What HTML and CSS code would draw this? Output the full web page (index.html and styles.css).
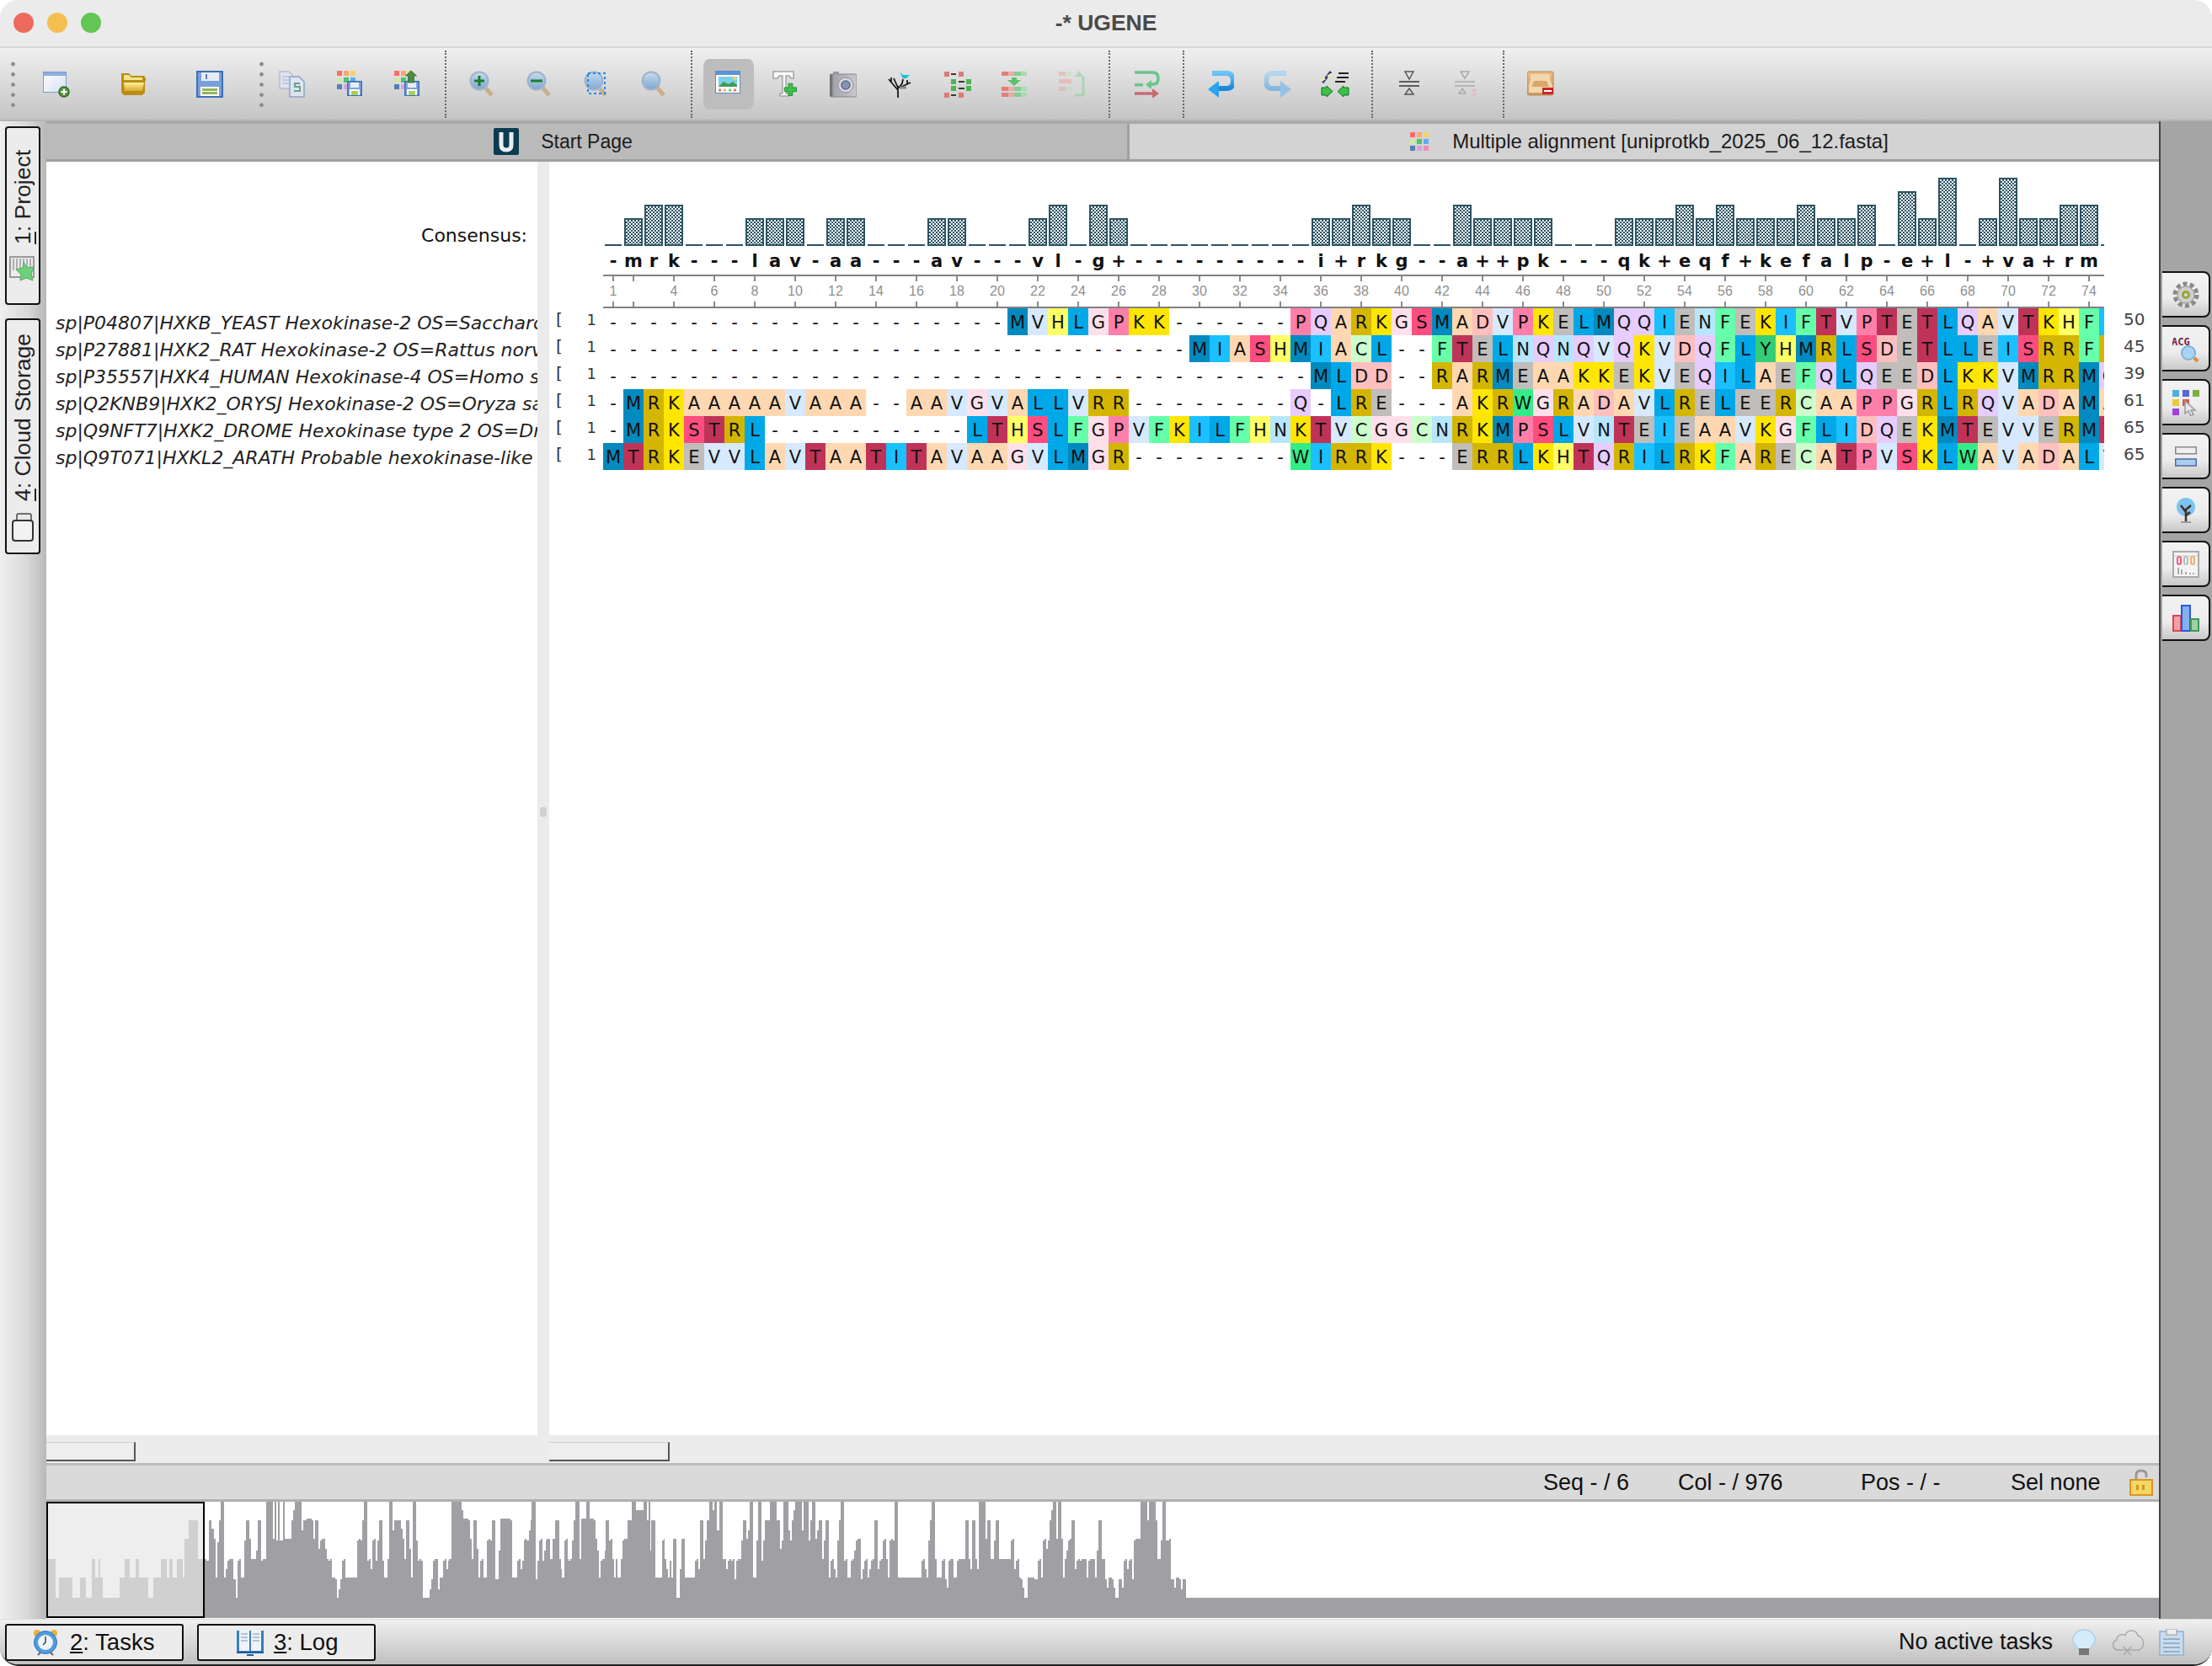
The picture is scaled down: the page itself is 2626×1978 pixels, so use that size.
FILE: index.html
```html
<!DOCTYPE html>
<html lang="en">
<head>
<meta charset="utf-8">
<title>-* UGENE</title>
<link rel="stylesheet" href="styles.css">
</head>
<body>
<svg class="defs" width="0" height="0" aria-hidden="true">
<defs>
<linearGradient id="gDoc" x1="0" y1="0" x2="1" y2="1"><stop offset="0" stop-color="#fff"/><stop offset="1" stop-color="#d5def0"/></linearGradient>
<linearGradient id="gGold" x1="0" y1="0" x2="0" y2="1"><stop offset="0" stop-color="#fff29a"/><stop offset="1" stop-color="#d9a92c"/></linearGradient>
<linearGradient id="gBlue" x1="0" y1="0" x2="0" y2="1"><stop offset="0" stop-color="#6cc3f5"/><stop offset="1" stop-color="#1a87dd"/></linearGradient>
<linearGradient id="gBlueF" x1="0" y1="0" x2="0" y2="1"><stop offset="0" stop-color="#b6d6ee"/><stop offset="1" stop-color="#86b6de"/></linearGradient>
<linearGradient id="gLens" x1="0" y1="0" x2="0" y2="1"><stop offset="0" stop-color="#c6dcef"/><stop offset="1" stop-color="#7fa6cf"/></linearGradient>
<linearGradient id="gTan" x1="0" y1="0" x2="0" y2="1"><stop offset="0" stop-color="#e9bd85"/><stop offset="1" stop-color="#cf965b"/></linearGradient>
<linearGradient id="gCam" x1="0" y1="0" x2="1" y2="0"><stop offset="0" stop-color="#55535a"/><stop offset=".15" stop-color="#a4a4ac"/><stop offset="1" stop-color="#c9c9cf"/></linearGradient>

<symbol id="i-floppy" viewBox="0 0 18 18"><rect x=".75" y=".75" width="16.5" height="16.5" fill="#7ea3dc" stroke="#3f6fb7" stroke-width="1.5"/><rect x="4" y="2" width="10" height="6" fill="#e8eef8"/><rect x="3" y="10" width="12" height="7" fill="#fff"/><rect x="5" y="12" width="8" height="5" fill="#a8cf5a"/></symbol>
<symbol id="i-grid3" viewBox="0 0 22 22"><rect width="6" height="6" fill="#ff6b6b"/><rect x="8" width="6" height="6" fill="#ffa670"/><rect x="16" width="6" height="6" fill="#f3d26b"/><rect y="8" width="6" height="6" fill="#d3e7ab"/><rect x="8" y="8" width="6" height="6" fill="#4dc36f"/><rect x="16" y="8" width="6" height="6" fill="#5aaef0"/><rect y="16" width="6" height="6" fill="#557fb5"/><rect x="8" y="16" width="6" height="6" fill="#d8a3e0"/><rect x="16" y="16" width="6" height="6" fill="#f08ac0"/></symbol>

<symbol id="i-new" viewBox="0 0 32 32"><rect x=".5" y="1.5" width="27" height="24" fill="url(#gDoc)" stroke="#7d9ccb"/><rect x="1" y="2" width="26" height="4" fill="#8fb0dc"/><circle cx="25" cy="25" r="6" fill="#5d9646" stroke="#2f6b22" stroke-width="1.5"/><path d="M25 21.5v7M21.500 25h7" stroke="#fff" stroke-width="2"/></symbol>
<symbol id="i-open" viewBox="0 0 32 32"><path d="M2 3h9l3 3h15l2 3v3l-1 1v13l-3 3H5l-3-3z" fill="#b88e17"/><path d="M5 5h6l3 3h13v3H5z" fill="#f5e28b"/><path d="M5 14h24l-2 10H6z" fill="url(#gGold)"/></symbol>
<symbol id="i-save" viewBox="0 0 32 32"><rect x="1" y="1" width="30" height="30" fill="#7aa0da" stroke="#3e6eb6" stroke-width="2"/><rect x="6" y="2" width="21" height="10" fill="#e6ecf7"/><rect x="11" y="4" width="2" height="6" fill="#5b7cb0"/><rect x="5" y="19" width="22" height="11" fill="#fff"/><rect x="7" y="21" width="18" height="3" fill="#93b45b"/><rect x="7" y="25" width="18" height="3" fill="#93b45b"/></symbol>
<symbol id="i-copy" viewBox="0 0 32 32"><path d="M1 1h11l4 4v16H1z" fill="#dfe3ee" stroke="#b4bdd3" stroke-width="1.500"/><path d="M4 7h8M4 11h8M4 15h8" stroke="#b8c2d8" stroke-width="1.500"/><path d="M13 7h11l6 6v18H13z" fill="#dde4f1" stroke="#8fa3c8" stroke-width="1.500"/><path d="M25 15h-6v4h6v5h-7" fill="none" stroke="#6aa187" stroke-width="2"/></symbol>
<symbol id="i-gridsave" viewBox="0 0 32 32"><use href="#i-grid3" width="22" height="22"/><use href="#i-floppy" x="12" y="12" width="18" height="18"/></symbol>
<symbol id="i-gridup" viewBox="0 0 32 32"><use href="#i-grid3" width="22" height="22"/><use href="#i-floppy" x="12" y="12" width="18" height="18"/><path d="M20 0l6.500 6h-3v8h-7V6h-3z" fill="#4c8d45" stroke="#2f6b2a" stroke-width=".8"/></symbol>
<symbol id="i-zoomin" viewBox="0 0 32 32"><path d="M19 20l8 9" stroke="#c9b08c" stroke-width="5"/><circle cx="12" cy="12" r="10.500" fill="url(#gLens)" stroke="#9fb3cc" stroke-width="2"/><path d="M12 6v12M6 12h12" stroke="#1e7a2e" stroke-width="3"/></symbol>
<symbol id="i-zoomout" viewBox="0 0 32 32"><path d="M19 20l8 9" stroke="#c9b08c" stroke-width="5"/><circle cx="12" cy="12" r="10.500" fill="url(#gLens)" stroke="#9fb3cc" stroke-width="2"/><path d="M5 12h14" stroke="#1e7a2e" stroke-width="3"/></symbol>
<symbol id="i-zoomfit" viewBox="0 0 32 32"><path d="M19 21l7 8" stroke="#c9b08c" stroke-width="5"/><circle cx="12" cy="12" r="10.500" fill="url(#gLens)" stroke="#9fb3cc" stroke-width="2"/><rect x="5" y="3" width="20" height="24" fill="none" stroke="#1c8ae8" stroke-width="2" stroke-dasharray="3 3"/></symbol>
<symbol id="i-zoom1" viewBox="0 0 32 32"><path d="M19 20l8 9" stroke="#c9b08c" stroke-width="5"/><circle cx="12" cy="12" r="10.500" fill="url(#gLens)" stroke="#9fb3cc" stroke-width="2"/></symbol>
<symbol id="i-img" viewBox="0 0 32 32"><rect x=".5" y=".5" width="29" height="26" fill="#fff" stroke="#5b8ccc"/><rect x="1" y="1" width="28" height="4" fill="#5f93d6"/><rect x="4" y="7" width="22" height="12" fill="#7fd0e6"/><path d="M4 19l6-6 6 3 5-3 5 4v2z" fill="#3f9c52"/><circle cx="23" cy="9" r="2" fill="#f6d35b"/><rect x="4" y="21.500" width="3" height="3" fill="#e8746a"/><rect x="10" y="21.500" width="3" height="3" fill="#f0b860"/><rect x="16" y="21.500" width="3" height="3" fill="#8ac46b"/><rect x="22" y="21.500" width="3" height="3" fill="#e8746a"/></symbol>
<symbol id="i-tplus" viewBox="0 0 32 32"><path d="M1 1h24v8h-3l-2-3h-4v21h3v3H9v-3h3V6H8L6 9H1z" fill="#fdfdfd" stroke="#a3a3a3" stroke-width="1.500"/><path d="M24 17v5h5v5h-5v5h-5v-5h-5v-5h5v-5z" transform="translate(1 -1) scale(.95)" fill="#3fc04c" stroke="#1f8c2c"/></symbol>
<symbol id="i-cam" viewBox="0 0 32 32"><rect x="0" y="4" width="32" height="27" rx="2" fill="url(#gCam)" stroke="#85858a"/><rect x="4" y="1" width="7" height="4" fill="#9a9aa0"/><circle cx="19" cy="17" r="9" fill="#d6d6dc" stroke="#8c8c94"/><circle cx="19" cy="17" r="5" fill="#8595b8" stroke="#5a6a8e" stroke-width="1.500"/></symbol>
<symbol id="i-tree" viewBox="0 0 32 32"><path d="M13 32V18M13 23L2 10M5 14V8M13 20L8 9M13 21l5-6 1-5M15 20l13-6M24 16v-5M19 8l2-2" fill="none" stroke="#1a1a1a" stroke-width="1.800"/><path d="M15 20h8" stroke="#8a8a8a" stroke-width="3"/><path d="M15 1l4 4h8l-4 4h-4z" fill="#12c3d3"/></symbol>
<symbol id="i-ladder" viewBox="0 0 32 32"><g fill="#df7a78"><rect y="1" width="6" height="6"/><rect x="17" y="1" width="6" height="6"/><rect y="26" width="6" height="6"/><rect x="17" y="26" width="6" height="6"/></g><g fill="#4bb752"><rect x="8" y="10" width="6" height="6"/><rect x="26" y="10" width="6" height="6"/><rect x="8" y="18" width="6" height="6"/><rect x="26" y="18" width="6" height="6"/></g><path d="M8 4h6M17 13h7M17 21h7M8 29h6" stroke="#3a3a3a" stroke-width="2"/></symbol>
<symbol id="i-gapdown" viewBox="0 0 32 32"><path d="M0 1h8v5H0z" fill="#e2807c"/><path d="M8 1h7v5H8z" fill="#eeaaa6"/><path d="M15 1h8v5h-8z" fill="#86cd90"/><path d="M23 1h7v5h-7z" fill="#a7dcb0"/><path d="M0 19h8v5H0zM0 26h8v5H0z" fill="#e2807c"/><path d="M8 19h7v5H8zM8 26h7v5H8z" fill="#eeaaa6"/><path d="M15 19h8v5h-8zM15 26h8v5h-8z" fill="#86cd90"/><path d="M23 19h7v5h-7zM23 26h7v5h-7z" fill="#a7dcb0"/><path d="M12 8h6v3h5l-8 7-8-7h5z" fill="#60c06a"/></symbol>
<symbol id="i-gapup" viewBox="0 0 32 32"><g opacity=".55"><path d="M0 1h8v5H0zM0 10h8v5H0zM0 19h8v5H0z" fill="#eea6a2"/><path d="M8 1h7v5H8zM8 19h7v5H8z" fill="#b9e4bf"/><path d="M8 10h7v5H8z" fill="#e6a6a2"/><path d="M19 29h10V6" fill="none" stroke="#8ad096" stroke-width="3"/><path d="M24 0l-5 7h10z" fill="#8ad096"/></g></symbol>
<symbol id="i-wrap" viewBox="0 0 32 32"><path d="M2 2h21q7 0 7 7t-6 7h-6" fill="none" stroke="#6cc48b" stroke-width="3.500"/><path d="M22 11l-7 5.500 7 5.500z" fill="#6cc48b"/><path d="M2 15h10v3.500H2z" fill="#6cc48b"/><path d="M2 27h22" stroke="#c76a74" stroke-width="3.500"/><path d="M23 21l8 6-8 6z" fill="#c76a74"/></symbol>
<symbol id="i-undo" viewBox="0 0 32 32"><path d="M6 3h17q8 0 8 9t-8 9H12" fill="none" stroke="url(#gBlue)" stroke-width="6"/><path d="M14 12L1 22l13 10z" fill="#2aa4ee"/></symbol>
<symbol id="i-redo" viewBox="0 0 32 32"><path d="M26 3H10q-8 0-8 9t8 9h11" fill="none" stroke="url(#gBlueF)" stroke-width="6"/><path d="M19 12l13 10-13 10z" fill="#95c2e6"/></symbol>
<symbol id="i-sort" viewBox="0 0 36 32"><path d="M3 14L13 1" stroke="#2d3a7a" stroke-width="3"/><path d="M1 12l5-3M9 7l5-3" stroke="#efe9a0" stroke-width="3"/><path d="M22 3h12M20 8h14M18 13h12" stroke="#222" stroke-width="2"/><path d="M2 20h6v-2l7 6.500-7 6.500v-2H2z" fill="#3cc148" stroke="#186e22"/><path d="M34 20h-6v-2l-7 6.500 7 6.500v-2h6z" fill="#3cc148" stroke="#186e22"/></symbol>
<symbol id="i-collapse" viewBox="0 0 26 32"><path d="M8 1h10l-5 9z" fill="none" stroke="#555" stroke-width="1.500"/><path d="M1 13h24M1 18h24" stroke="#333" stroke-width="1.500"/><path d="M13 21l5 7H8z" fill="none" stroke="#555" stroke-width="1.500"/></symbol>
<symbol id="i-expand" viewBox="0 0 30 32"><path d="M8 1h10l-5 8z" fill="none" stroke="#aaa" stroke-width="1.500"/><path d="M1 13h24M1 18h24" stroke="#aaa" stroke-width="1.500"/><path d="M10 21l4 6H6z" fill="none" stroke="#aaa" stroke-width="1.500"/><path d="M24 20l4 5h-8zM24 32l4-5h-8z" fill="#e5bcc6"/></symbol>
<symbol id="i-box" viewBox="0 0 32 32"><rect x="0" y="1" width="31" height="28" rx="2" fill="url(#gTan)" stroke="#b38a58"/><path d="M4 4h23v7l3 7v8H2v-8l2-7z" fill="#f3d7ae"/><path d="M8 12h15l3 7H5z" fill="#d9a76a"/><rect x="18" y="20" width="13" height="8" fill="#c9262c"/><rect x="20" y="23" width="9" height="2" fill="#fff"/></symbol>

<symbol id="i-u" viewBox="0 0 30 32"><rect width="30" height="32" rx="2" fill="#0c3c50"/><path d="M9 5v15q0 6 6 6t6-6V5" fill="none" stroke="#e8eef0" stroke-width="5"/></symbol>
<symbol id="i-msa" viewBox="0 0 22 22"><use href="#i-grid3" width="22" height="22"/></symbol>
<symbol id="i-proj" viewBox="0 0 32 32"><rect x="1" y="1" width="28" height="24" fill="none" stroke="#9a9a9a" stroke-width="2"/><path d="M5 3v14M9 3v14M13 3v14M17 3v14M21 3v14M25 3v14" stroke="#9a9a9a" stroke-width="1.500"/><path d="M17 7l4 7 8-1-3 8 2 8-8-3-7 3 1-7-6-6 8-2z" fill="#6fd07a" stroke="#4fae5c"/></symbol>
<symbol id="i-cloudst" viewBox="0 0 28 34"><rect x="7" y="1" width="17" height="24" rx="2" fill="#e8e8e8" stroke="#444" stroke-width="1.500"/><rect x="2" y="9" width="24" height="24" rx="3" fill="#f2f2f2" stroke="#333" stroke-width="2"/></symbol>

<symbol id="i-gear" viewBox="0 0 32 32"><circle cx="16" cy="16" r="13" fill="none" stroke="#8a8a8a" stroke-width="5" stroke-dasharray="5 3.200"/><circle cx="16" cy="16" r="10" fill="#cfcfcf" stroke="#909090"/><circle cx="16" cy="16" r="5" fill="#9aa43a"/><circle cx="16" cy="16" r="2" fill="#ddd"/></symbol>
<symbol id="i-acg" viewBox="0 0 32 32"><text x="-1" y="12" class="acg-text">ACG</text><circle cx="19" cy="21" r="8" fill="#a9d3f2" stroke="#7cb2dd" stroke-width="2"/><path d="M26 27l4 4" stroke="#e08a3a" stroke-width="4"/></symbol>
<symbol id="i-pal" viewBox="0 0 32 32"><rect x="0" y="1" width="8" height="8" fill="#53aee0"/><rect x="12" y="1" width="8" height="8" fill="#5767d6"/><rect x="24" y="1" width="8" height="8" fill="#7cb23c"/><rect x="0" y="12" width="8" height="8" fill="#e8cc3f"/><rect x="12" y="12" width="8" height="8" fill="#d8574f"/><rect x="0" y="23" width="8" height="8" fill="#a23fe0"/><path d="M15 14v15l4-3 3 6 3-2-3-5h5z" fill="#e8e8e8" stroke="#9a9a9a" stroke-width="1.500"/></symbol>
<symbol id="i-bars2" viewBox="0 0 26 24"><rect x=".75" y=".75" width="24.500" height="8" fill="#efefef" stroke="#888" stroke-width="1.500"/><rect x=".75" y="15" width="24.500" height="8" fill="#a8cff0" stroke="#4c6a96" stroke-width="1.500"/></symbol>
<symbol id="i-bulbtree" viewBox="0 0 26 32"><circle cx="13" cy="12" r="11" fill="#7cc3f3"/><path d="M13 30V14M13 18L7 10M13 15l6-5M13 22l5-4" stroke="#4a2d18" stroke-width="2.500" fill="none"/><path d="M7 30h12" stroke="#9a9a9a" stroke-width="2"/></symbol>
<symbol id="i-stat" viewBox="0 0 32 32"><rect x="1" y="1" width="30" height="30" fill="#f4f4f4" stroke="#aaa" stroke-width="2"/><path d="M2 6h28" stroke="#ccc" stroke-width="1"/><rect x="6" y="7" width="4" height="9" rx="2" fill="none" stroke="#ee5a7f" stroke-width="2"/><rect x="14" y="7" width="4" height="9" rx="2" fill="none" stroke="#bcbcbc" stroke-width="2"/><rect x="22" y="7" width="4" height="9" rx="2" fill="none" stroke="#eeb26a" stroke-width="2"/><path d="M7 20v8M11 22v6M16 25v3M21 26v2M25 26v2" stroke="#aaa" stroke-width="2"/></symbol>
<symbol id="i-chart" viewBox="0 0 32 32"><rect x="1" y="13" width="9" height="18" fill="#f4a0a8" stroke="#e0424f" stroke-width="2"/><rect x="11" y="1" width="10" height="30" fill="#86aef2" stroke="#2a5ad8" stroke-width="2"/><rect x="22" y="17" width="9" height="14" fill="#9ed0a8" stroke="#3c9a52" stroke-width="2"/></symbol>

<symbol id="i-clock" viewBox="0 0 30 32"><circle cx="5" cy="5" r="4" fill="#e8b13a"/><circle cx="25" cy="5" r="4" fill="#e8b13a"/><circle cx="15" cy="16" r="13.500" fill="#4e9be0" stroke="#2f74b8"/><circle cx="15" cy="16" r="9" fill="#eef3f8"/><path d="M15 9v7l-3 3" stroke="#444" stroke-width="1.500" fill="none"/><path d="M6 31l3-3M24 31l-3-3" stroke="#666" stroke-width="2"/></symbol>
<symbol id="i-book" viewBox="0 0 34 32"><rect x="1" y="2" width="32" height="26" fill="#3a7cc2"/><rect x="4" y="1" width="12" height="25" fill="#eef3f8"/><rect x="18" y="1" width="12" height="25" fill="#eef3f8"/><path d="M6 6h8M6 10h8M6 14h8M20 6h8M20 10h8M20 14h8" stroke="#9fb4c8" stroke-width="1.500"/><path d="M1 28h32M13 31h8" stroke="#1d5c9e" stroke-width="2"/></symbol>
<symbol id="i-bulb" viewBox="0 0 30 32"><path d="M15 1a13 12 0 0 1 13 12c0 5-5 8-7 12H9c-2-4-7-7-7-12A13 12 0 0 1 15 1z" fill="#d6ecfa" stroke="#a9d0ea" stroke-width="1.500"/><rect x="9" y="23" width="12" height="8" fill="#777"/></symbol>
<symbol id="i-cloud" viewBox="0 0 40 34"><path d="M8 26C1 26-1 16 6 14c0-6 7-8 10-5 2-8 13-8 15 0 7 1 10 14 1 17z" transform="translate(1 0)" fill="none" stroke="#aaa" stroke-width="1.500"/><path d="M15 22l9 10M24 22l-9 10" stroke="#aaa" stroke-width="1.500"/></symbol>
<symbol id="i-clip" viewBox="0 0 30 32"><rect x="1" y="3" width="28" height="28" fill="#c8dcf0" stroke="#8fb0cf" stroke-width="1.500"/><rect x="9" y="0" width="12" height="7" fill="#eee" stroke="#999"/><path d="M5 12h20M5 17h20M5 22h20M5 27h20" stroke="#8aa0b6" stroke-width="1.500"/></symbol>
<symbol id="i-lock" viewBox="0 0 28 32"><path d="M8 14V7q0-5 6-5t6 5v3" fill="none" stroke="#9a9a9a" stroke-width="3"/><rect x="1" y="13" width="26" height="18" fill="#f6d860" stroke="#d8942a" stroke-width="2"/><path d="M8 19h3v6H8zM15 19h3v6h-3z" fill="#c9992b"/></symbol>
</defs>
</svg>

<div class="window">
  <header class="titlebar">
    <div class="lights"><span class="light red"></span><span class="light yellow"></span><span class="light green"></span></div>
    <div class="title">-* UGENE</div>
    <div></div>
  </header>

  <nav class="toolbar">
    <span class="handle first"></span>
    <button class="tb wide"><svg class="i32"><use href="#i-new"/></svg></button>
    <button class="tb wide"><svg class="i32"><use href="#i-open"/></svg></button>
    <button class="tb wide"><svg class="i32"><use href="#i-save"/></svg></button>
    <span class="handle second"></span>
    <button class="tb mid"><svg class="i32"><use href="#i-copy"/></svg></button>
    <button class="tb mid"><svg class="i32"><use href="#i-gridsave"/></svg></button>
    <button class="tb mid"><svg class="i32"><use href="#i-gridup"/></svg></button>
    <span class="sep"></span>
    <button class="tb"><svg class="i32"><use href="#i-zoomin"/></svg></button>
    <button class="tb"><svg class="i32"><use href="#i-zoomout"/></svg></button>
    <button class="tb"><svg class="i32"><use href="#i-zoomfit"/></svg></button>
    <button class="tb"><svg class="i32"><use href="#i-zoom1"/></svg></button>
    <span class="sep"></span>
    <button class="tb active"><svg class="i32"><use href="#i-img"/></svg></button>
    <button class="tb"><svg class="i32"><use href="#i-tplus"/></svg></button>
    <button class="tb"><svg class="i32"><use href="#i-cam"/></svg></button>
    <button class="tb"><svg class="i32"><use href="#i-tree"/></svg></button>
    <button class="tb"><svg class="i32"><use href="#i-ladder"/></svg></button>
    <button class="tb"><svg class="i32"><use href="#i-gapdown"/></svg></button>
    <button class="tb"><svg class="i32"><use href="#i-gapup"/></svg></button>
    <span class="sep"></span>
    <button class="tb"><svg class="i32"><use href="#i-wrap"/></svg></button>
    <span class="sep"></span>
    <button class="tb"><svg class="i32"><use href="#i-undo"/></svg></button>
    <button class="tb"><svg class="i32"><use href="#i-redo"/></svg></button>
    <button class="tb"><svg class="i36"><use href="#i-sort"/></svg></button>
    <span class="sep"></span>
    <button class="tb"><svg class="i26"><use href="#i-collapse"/></svg></button>
    <button class="tb"><svg class="i30"><use href="#i-expand"/></svg></button>
    <span class="sep"></span>
    <button class="tb"><svg class="i32"><use href="#i-box"/></svg></button>
  </nav>

  <div class="main">
    <aside class="dock-left">
      <div class="vtab project"><span class="vtab-text"><u>1</u>: Project</span><svg class="i32"><use href="#i-proj"/></svg></div>
      <div class="vtab cloud"><span class="vtab-text"><u>4</u>: Cloud Storage</span><svg class="i-cloudst"><use href="#i-cloudst"/></svg></div>
    </aside>

    <div class="center">
      <div class="tabs">
        <div class="tab start"><svg class="tab-u"><use href="#i-u"/></svg><span>Start Page</span></div>
        <div class="tab current"><svg class="tab-msa"><use href="#i-msa"/></svg><span>Multiple alignment [uniprotkb_2025_06_12.fasta]</span></div>
      </div>

      <div class="editor">
        <div class="names">
          <div class="consensus-label">Consensus:</div>
          <ul class="name-list">
            <li>sp|P04807|HXKB_YEAST Hexokinase-2 OS=Saccharomyces cerevisiae</li>
            <li>sp|P27881|HXK2_RAT Hexokinase-2 OS=Rattus norvegicus</li>
            <li>sp|P35557|HXK4_HUMAN Hexokinase-4 OS=Homo sapiens</li>
            <li>sp|Q2KNB9|HXK2_ORYSJ Hexokinase-2 OS=Oryza sativa</li>
            <li>sp|Q9NFT7|HXK2_DROME Hexokinase type 2 OS=Drosophila</li>
            <li>sp|Q9T071|HXKL2_ARATH Probable hexokinase-like 2</li>
          </ul>
        </div>
        <div class="splitter"><span class="grip"></span></div>
        <div class="sequences">
          <div class="hist" id="hist"></div>
          <div class="cons" id="cons"></div>
          <div class="ruler" id="ruler"></div>
          <div class="rows" id="rows"></div>
        </div>
      </div>

      <div class="scrolls">
        <div class="scroll-a"><span class="thumb thumb-a"></span></div>
        <div class="scroll-b"><span class="thumb thumb-b"></span></div>
      </div>

      <div class="status">
        <span class="st st-seq">Seq - / 6</span>
        <span class="st st-col">Col - / 976</span>
        <span class="st st-pos">Pos - / -</span>
        <span class="st st-sel">Sel none</span>
        <svg class="i-lock"><use href="#i-lock"/></svg>
      </div>

      <div class="overview">
        <svg class="overview-svg" viewBox="55 1784 2508 138" shape-rendering="crispEdges">
          <rect x="55" y="1784" width="188" height="138" fill="#eeeeee"/>
          <g transform="translate(0 1680) scale(.5740 .33333)">
            <path fill="#d0d0d0" d="M98 726V654H100V515H115V654H122V582H150V654H165V582H178V654H190V515H196V582H203V515H208V582H213V654H248V582H258V515H268V582H280V515H288V582H306V654H317V582H332V515H345V582H350V515H358V582H365V515H378V582H382V445H390V378H410V515H424V726Z"/>
          </g>
          <g class="chart" transform="translate(240 1780) scale(.38265 .33333)">
            <path d="M8 426V216H14V222H20V78H30V108H36V144H42V282H47V156H52V78H57V12H68V282H72V252H78V222H84V216H98V288H104V354H110V222H115V216H120V282H131V150H136V78H146V144H152V216H167V186H172V78H183V222H188V216H199V12H220V144H225V12H231V150H236V12H241V150H250V12H256V144H276V78H282V42H287V12H308V114H314V78H324V72H340V78H345V144H350V78H360V180H365V150H371V144H382V180H387V216H392V222H397V216H402V282H412V288H417V354H423V324H428V288H433V222H438V216H444V282H481V150H486V144H491V150H497V78H502V12H512V222H518V216H523V252H528V150H533V144H538V222H544V150H549V78H559V222H564V282H575V216H580V12H590V114H596V78H616V108H621V144H627V216H632V78H642V180H648V282H653V12H664V150H669V222H674V216H679V222H685V354H706V324H711V288H717V222H722V216H732V324H737V282H747V222H752V216H757V252H762V222H767V216H773V12H805V42H810V72H826V78H831V144H836V216H841V78H852V180H857V282H862V222H867V216H872V282H883V150H888V144H893V150H899V78H909V288H920V186H925V72H956V78H961V282H977V222H982V216H987V252H992V222H997V150H1002V144H1007V150H1013V114H1018V78H1023V12H1035V288H1040V222H1045V150H1050V144H1055V222H1060V186H1065V150H1070V144H1080V216H1086V144H1096V78H1107V216H1112V252H1117V282H1123V150H1128V144H1133V216H1138V222H1143V216H1148V150H1153V78H1159V12H1170V216H1175V72H1191V12H1201V72H1216V78H1221V144H1226V186H1232V282H1237V222H1242V216H1248V186H1253V78H1263V150H1268V144H1273V216H1278V282H1284V216H1289V282H1299V216H1304V150H1310V144H1320V78H1332V12H1347V42H1369V12H1379V78H1384V12H1389V186H1394V78H1405V282H1426V150H1431V144H1436V216H1441V252H1446V282H1451V222H1456V282H1461V144H1472V354H1483V252H1488V144H1498V282H1529V222H1534V216H1539V252H1544V78H1555V216H1560V150H1565V78H1569V426Z"/>
          </g>
          <g class="chart" transform="translate(840 1780) scale(.38265 .33333)">
            <path d="M0 426V78H5V12H15V42H20V12H30V114H37V12H47V216H57V252H62V222H67V216H72V222H78V216H83V288H88V222H93V216H104V150H110V78H120V144H125V114H131V12H141V282H152V150H157V12H167V222H172V150H178V78H193V12H214V78H225V180H230V150H235V12H251V114H256V150H262V78H267V42H272V12H293V114H298V12H314V150H319V78H324V12H335V144H340V114H345V78H355V216H360V150H366V78H376V282H381V222H386V216H392V252H397V282H402V150H408V78H413V12H423V222H428V216H433V282H444V222H449V216H455V186H460V150H465V144H475V288H481V252H486V222H491V216H497V282H502V252H507V222H512V216H517V78H528V252H533V222H538V216H544V150H549V144H554V216H559V282H564V150H570V144H575V150H580V12H591V282H664V222H669V216H674V252H679V282H685V150H690V78H695V12H706V216H711V282H727V222H732V216H737V288H742V318H748V222H753V216H763V282H774V222H779V216H800V78H810V216H815V252H821V78H831V216H836V252H841V12H862V144H868V78H878V216H889V150H894V78H904V216H941V150H946V144H951V252H956V222H961V216H966V282H972V288H977V318H983V354H993V282H1014V288H1024V222H1029V216H1035V282H1040V150H1045V144H1050V180H1056V150H1061V78H1066V42H1071V12H1082V144H1087V12H1098V144H1103V282H1108V216H1113V186H1118V150H1124V144H1129V78H1139V252H1144V222H1150V216H1155V222H1160V216H1176V282H1181V222H1186V216H1201V282H1207V186H1212V78H1222V216H1233V288H1238V318H1243V282H1254V288H1259V318H1264V354H1275V288H1286V318H1291V222H1296V216H1301V252H1306V222H1311V216H1316V288H1322V150H1327V144H1343V12H1364V78H1369V12H1390V78H1395V216H1406V150H1411V12H1422V150H1432V144H1437V288H1448V318H1453V282H1463V288H1469V324H1474V288H1484V354H1568V426Z"/>
          </g>
          <rect class="chart-rest" x="1440" y="1898" width="1123" height="24"/>
          <rect class="frame" x="56" y="1785" width="186" height="136"/>
        </svg>
      </div>
    </div>

    <aside class="dock-right">
      <div class="rbtn"><svg class="i32"><use href="#i-gear"/></svg></div>
      <div class="rbtn"><svg class="i32"><use href="#i-acg"/></svg></div>
      <div class="rbtn"><svg class="i32"><use href="#i-pal"/></svg></div>
      <div class="rbtn"><svg class="i26"><use href="#i-bars2"/></svg></div>
      <div class="rbtn"><svg class="i32"><use href="#i-bulbtree"/></svg></div>
      <div class="rbtn"><svg class="i32"><use href="#i-stat"/></svg></div>
      <div class="rbtn"><svg class="i32"><use href="#i-chart"/></svg></div>
    </aside>
  </div>

  <footer class="bottom">
    <div class="btab tasks"><svg class="i-clock"><use href="#i-clock"/></svg><span><u>2</u>: Tasks</span></div>
    <div class="btab log"><svg class="i-book"><use href="#i-book"/></svg><span><u>3</u>: Log</span></div>
    <div class="bottom-right">
      <span class="no-tasks">No active tasks</span>
      <svg class="i30"><use href="#i-bulb"/></svg>
      <svg class="i-cloud"><use href="#i-cloud"/></svg>
      <svg class="i30"><use href="#i-clip"/></svg>
    </div>
  </footer>
</div>
<script src="app.js"></script>
</body>
</html>
```
FILE: styles.css
```css
* { box-sizing: border-box; }
html, body { margin: 0; padding: 0; background: #fff; }
body { font-family: "Liberation Sans", Arial, sans-serif; color: #111; }
.defs { position: absolute; }
.acg-text { font: bold 12px "DejaVu Sans Mono", monospace; fill: #7c2346; }

.window {
  width: 2626px; height: 1978px; display: flex; flex-direction: column;
  border-radius: 22px; overflow: hidden; border-bottom: 2px solid #222; background: #ebebeb;
}

/* title bar */
.titlebar {
  height: 57px; flex: none; display: grid; grid-template-columns: 1fr auto 1fr; align-items: center;
  background: #ebebeb; border-bottom: 2px solid #d8d8d8; padding-bottom: 1px;
}
.lights { display: flex; gap: 16px; padding-left: 16px; }
.light { width: 24px; height: 24px; border-radius: 50%; }
.red { background: #ee6a5e; } .yellow { background: #f5bf4f; } .green { background: #62c554; }
.title { font-weight: 700; font-size: 26.5px; color: #4a4a4a; }

/* tool bar */
.toolbar {
  height: 87px; flex: none; display: flex; align-items: center;
  background: linear-gradient(#f0f0f0, #c4c4c4); border-bottom: 2px solid #b4b4b4;
}
.tb {
  width: 68px; height: 60px; flex: none; display: flex; align-items: center; justify-content: center;
  background: none; border: 0; padding: 0;
}
.tb.wide { width: 91px; }
.tb.mid { width: 68.5px; }
.tb.active { background: #bdbdbd padding-box; border: solid transparent; border-width: 0 4px; border-radius: 10px; }
.i32 { width: 32px; height: 32px; }
.i36 { width: 36px; height: 32px; }
.i30 { width: 30px; height: 32px; }
.i26 { width: 26px; height: 32px; }
.handle {
  width: 5px; height: 60px; flex: none;
  background: radial-gradient(circle, #8c8c8c 2px, transparent 2.6px) 0 0 / 5px 12.2px repeat-y;
}
.handle.first { margin: 0 3px 0 13px; }
.handle.second { margin: 0 0 0 14px; }
.sep { width: 2px; height: 80px; flex: none; margin: 0 9px; border-left: 2px dotted #666; }

/* main */
.main { flex: 1; display: flex; min-height: 0; }

.dock-left {
  width: 55px; flex: none; display: flex; flex-direction: column; gap: 16px; padding: 6px 0 0 6px;
  background: linear-gradient(90deg, #efefef, #d8d8d8 60%, #b8b8b8);
}
.vtab {
  width: 42px; border: 2px solid #111; border-radius: 4px; background: #ececec;
  display: flex; flex-direction: column; align-items: center; gap: 14px;
}
.vtab.project { height: 212px; padding-top: 26px; }
.vtab.cloud { height: 280px; padding-top: 16px; }
.vtab-text {
  writing-mode: vertical-rl; transform: rotate(180deg); font-size: 26.5px; color: #222; white-space: nowrap; line-height: 38px;
}
.i-cloudst { width: 28px; height: 34px; }

.center { flex: 1; min-width: 0; display: flex; flex-direction: column; }

.tabs {
  height: 48px; flex: none; display: flex; border-top: 3px solid #a8a8a8; border-bottom: 3px solid #a0a0a0;
}
.tab { display: flex; align-items: center; justify-content: center; font-size: 23px; color: #1c1c1c; }
.tab.start { width: 1286px; background: #bababa; padding-right: 56px; gap: 26px; border-right: 3px solid #a0a0a0; }
.tab.current { flex: 1; background: #d3d3d3; padding-left: 12px; gap: 28px; font-size: 24px; }
.tab-u { width: 30px; height: 32px; }
.tab-msa { width: 22px; height: 22px; }

.editor { flex: 1; display: flex; min-height: 0; background: #fff; }

.names { width: 583px; flex: none; overflow: hidden; }
.consensus-label {
  margin-top: 72px; height: 32px; padding-right: 12px; text-align: right;
  font: 22px/32px "DejaVu Sans", sans-serif;
}
.name-list { list-style: none; margin: 70px 0 0; padding: 0 0 0 11px; }
.name-list li {
  height: 32px; font: italic 22px/36px "DejaVu Sans", sans-serif; white-space: nowrap; color: #222;
}
.splitter { width: 14px; flex: none; background: #ebebeb; display: flex; align-items: center; justify-content: center; padding-top: 32px; }
.grip { width: 8px; height: 12px; border-radius: 4px; background: #d0d0d0; }

.sequences { flex: 1; min-width: 0; padding-top: 19px; }
.hist, .cons, .ruler { margin-left: 64px; width: 1782px; overflow: hidden; display: flex; }
.hist { height: 81px; align-items: flex-end; }
.hb {
  width: 22px; margin: 0 1px; flex: none; border: 2px solid #2b5363;
  background: repeating-conic-gradient(#2b5363 0 25%, #fff 0 50%) 0 0 / 4px 4px;
}
.h2 { height: 33px; } .h3 { height: 49px; } .h4 { height: 65px; } .h5 { height: 81px; }
.hd { width: 20px; height: 2px; margin: 0 2px; flex: none; background: #2b5363; }

.cons { height: 34px; }
.cons span {
  width: 24px; flex: none; text-align: center; font: bold 21px/36px "DejaVu Sans", sans-serif; color: #111;
}

.ruler { height: 40px; border-top: 2px solid #808080; border-bottom: 2px solid #808080; }
.rt { width: 24px; flex: none; position: relative; text-align: center; font-size: 16px; line-height: 36px; color: #8f8f8f; }
.rt.tick::before, .rt.tick::after { content: ""; position: absolute; left: 11px; width: 2px; height: 6px; background: #8a8a8a; }
.rt.tick::before { top: 0; }
.rt.tick::after { bottom: 0; }

.row { height: 32px; display: flex; font-family: "DejaVu Sans", sans-serif; }
.row-head { width: 64px; flex: none; display: flex; justify-content: space-between; padding: 0 8px; color: #333; font-size: 18px; line-height: 27px; }
.bracket { font-size: 20px; }
.cells { width: 1782px; flex: none; display: flex; overflow: hidden; }
.cells span { width: 24px; flex: none; text-align: center; font-size: 21px; line-height: 34px; color: #111; }
.row-end { padding-left: 23px; font-size: 20px; line-height: 27px; color: #444; }

.aa-A { background: #ffd8b1; } .aa-C { background: #ccffcc; } .aa-D { background: #ffbfbf; }
.aa-E { background: #c0bdba; } .aa-F { background: #66ffaa; } .aa-G { background: #ffe0ea; }
.aa-H { background: #ffff66; } .aa-I { background: #1ac0ff; } .aa-K { background: #ffe600; }
.aa-L { background: #00a8e8; } .aa-M { background: #008abf; } .aa-N { background: #b8e6ff; }
.aa-P { background: #ff7fa8; } .aa-Q { background: #e6ccff; } .aa-R { background: #d4b600; }
.aa-S { background: #ff4d80; } .aa-T { background: #c03358; } .aa-V { background: #d6e9ff; }
.aa-W { background: #33ee88; } .aa-Y { background: #33cc77; }

.scrolls { height: 33px; flex: none; display: flex; background: #ececec; padding-top: 8px; }
.scroll-a { width: 597px; flex: none; }
.thumb { display: block; height: 23px; background: #eeeeee; border-top: 1px solid #cfcfcf; border-right: 2px solid #555; border-bottom: 2px solid #555; }
.thumb-a { width: 106px; }
.thumb-b { width: 143px; }

.status {
  height: 46px; flex: none; display: flex; justify-content: flex-end; align-items: center;
  background: #dadada; border-top: 3px solid #bbb; border-bottom: 3px solid #b0b0b0; padding-right: 7px;
  font-size: 27px; color: #111;
}
.st-seq { width: 160px; } .st-col { width: 217px; } .st-pos { width: 178px; } .st-sel { width: 141px; }
.i-lock { width: 28px; height: 32px; }

.overview { height: 139px; flex: none; background: #fff; }
.overview-svg { display: block; width: 2508px; height: 138px; }
.chart { fill: #a09fa3; }
.chart-rest { fill: #a09fa3; }
.frame { fill: none; stroke: #000; stroke-width: 2; }

.dock-right {
  width: 63px; flex: none; display: flex; flex-direction: column; gap: 9px; padding: 178px 0 0 2px;
  background: #a5a5a5; border-left: 2px solid #444;
}
.rbtn {
  width: 57px; height: 55px; flex: none; display: flex; align-items: center; justify-content: center;
  background: linear-gradient(#f2f2f2, #ececec 60%, #c8c8c8); border: 2px solid #111; border-left: 0; border-radius: 0 8px 8px 0;
}

.bottom {
  height: 54px; flex: none; display: flex; align-items: center; gap: 16px; padding-left: 6px;
  background: linear-gradient(#f0f0f0, #c0c0c0); border-top: 1px solid #ddd;
}
.btab {
  width: 212px; height: 44px; display: flex; align-items: center; gap: 14px;
  border: 2px solid #111; border-radius: 3px; background: #ececec; font-size: 27.5px; color: #111;
}
.tasks { padding-left: 31px; }
.log { padding-left: 44px; gap: 11px; }
.i-clock { width: 30px; height: 32px; }
.i-book { width: 34px; height: 32px; }
.bottom-right { margin-left: auto; display: flex; align-items: center; gap: 17px; padding-right: 33px; }
.no-tasks { font-size: 27px; margin-right: 5px; color: #111; }
.i-cloud { width: 40px; height: 34px; }
```
FILE: app.js
```js
var SEQS = [
  ["--------------------MVHLGPKK------PQARKGSMADVPKELMQQIENFEKIFTVPTETLQAVTKHFI", 50],
  ["-----------------------------MIASHMIACL--FTELNQNQVQKVDQFLYHMRLSDETLLEISRRFR", 45],
  ["-----------------------------------MLDD--RARMEAAKKEKVEQILAEFQLQEEDLKKVMRRMQ", 39],
  ["-MRKAAAAAVAAA--AAVGVALLVRR--------Q-LRE---AKRWGRADAVLRELEERCAAPPGRLRQVADAMA", 61],
  ["-MRKSTRL----------LTHSLFGPVFKILFHNKTVCGGCNRKMPSLVNTEIEAAVKGFLIDQEKMTEVVERMT", 65],
  ["MTRKEVVLAVTAATITAVAAGVLMGR--------WIRRK---ERRLKHTQRILRKFARECATPVSKLWAVADALV", 65]
];
var CONS = "-mrk---lav-aa---av---vl-g+---------i+rkg--a++pk---qk+eqf+kefalp-e+l-+va+rm";
var HIST = "1 2 3 3 1 1 1 2 2 2 1 2 2 1 1 1 2 2 1 1 1 2 3 1 3 2 1 1 1 1 1 1 1 1 1 2 2 3 2 2 1 1 3 2 2 2 2 1 1 1 2 2 2 3 2 3 2 2 2 3 2 2 3 1 4 2 5 1 2 5 2 2 3 3 1".split(" ");

function el(tag, cls, text) {
  var e = document.createElement(tag);
  if (cls) e.className = cls;
  if (text !== undefined) e.textContent = text;
  return e;
}

var hist = document.getElementById("hist");
HIST.forEach(function (h) {
  hist.appendChild(h === "1" ? el("span", "hd") : el("span", "hb h" + h));
});

var cons = document.getElementById("cons");
CONS.split("").forEach(function (c) { cons.appendChild(el("span", "", c)); });

var ruler = document.getElementById("ruler");
for (var i = 0; i < 75; i++) {
  var tick = i === 0 || i === 1 || i % 2 === 1;
  var label = (i === 0) ? "1" : (i % 2 === 1 && i > 1 ? String(i + 1) : "");
  ruler.appendChild(el("span", tick ? "rt tick" : "rt", label));
}

var rows = document.getElementById("rows");
SEQS.forEach(function (s) {
  var row = el("div", "row");
  var head = el("div", "row-head");
  head.appendChild(el("span", "bracket", "["));
  head.appendChild(el("span", "", "1"));
  row.appendChild(head);
  var cells = el("div", "cells");
  s[0].split("").forEach(function (c) {
    cells.appendChild(el("span", c === "-" ? "" : "aa-" + c, c));
  });
  row.appendChild(cells);
  row.appendChild(el("div", "row-end", String(s[1])));
  rows.appendChild(row);
});
```
